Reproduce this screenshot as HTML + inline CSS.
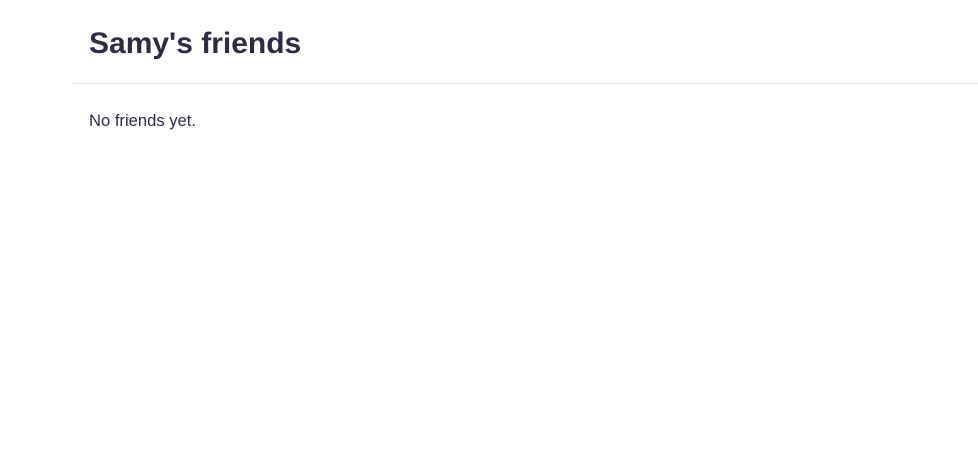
<!DOCTYPE html>
<html><head><style>
body{margin:0;background:#fff;font-family:"Liberation Sans",sans-serif;color:#2c2c44;}
h1{position:absolute;left:89px;top:24px;margin:0;font-size:30px;font-weight:bold;line-height:40px;}
.hr{position:absolute;left:73px;right:0;top:83px;height:1px;background:#e4e4e4;}
p{position:absolute;left:89px;top:111px;margin:0;font-size:16.6px;line-height:20px;}
</style></head><body>
<h1>Samy's friends</h1>
<div class="hr"></div>
<p>No friends yet.</p>
</body></html>
